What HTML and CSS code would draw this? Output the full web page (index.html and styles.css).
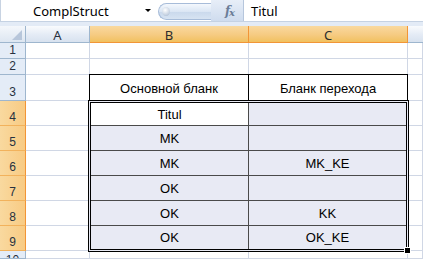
FILE: index.html
```html
<!DOCTYPE html>
<html>
<head>
<meta charset="utf-8">
<link rel="stylesheet" href="styles.css">
</head>
<body>
<div class="app">
  <div class="fbar">
    <div class="namebox"><span class="name">ComplStruct</span><span class="arrow"></span></div>
    <div class="splitter"><span class="knob"><span class="ball"></span></span></div>
    <div class="fx"><span>f</span><span class="x">x</span></div>
    <div class="input">Titul</div>
  </div>
  <div class="band"></div>
  <div class="sheet">
    <div class="table">
      <div class="thead">
        <div class="th th-b">Основной бланк</div>
        <div class="th">Бланк перехода</div>
      </div>
      <div class="tbody">
        <div class="td td-b active">Titul</div><div class="td"></div>
        <div class="td td-b">MK</div><div class="td"></div>
        <div class="td td-b">MK</div><div class="td">MK_KE</div>
        <div class="td td-b">OK</div><div class="td"></div>
        <div class="td td-b">OK</div><div class="td">KK</div>
        <div class="td td-b last">OK</div><div class="td last">OK_KE</div>
      </div>
      <span class="handle"></span>
    </div>

    <div class="corner"><span class="tri"></span></div>
    <div class="ch">A</div>
    <div class="ch sel">B</div>
    <div class="ch sel">C</div>
    <div class="ch ch-last"></div>

    <div class="rh">1</div><div class="c"></div><div class="c"></div><div class="c"></div><div class="c"></div>
    <div class="rh">2</div><div class="c"></div><div class="c"></div><div class="c"></div><div class="c"></div>
    <div class="rh">3</div><div class="c"></div><div class="c"></div>
    <div class="rh sel">4</div><div class="c"></div><div class="c"></div>
    <div class="rh sel">5</div><div class="c"></div><div class="c"></div>
    <div class="rh sel">6</div><div class="c"></div><div class="c"></div>
    <div class="rh sel">7</div><div class="c"></div><div class="c"></div>
    <div class="rh sel">8</div><div class="c"></div><div class="c"></div>
    <div class="rh sel">9</div><div class="c"></div><div class="c"></div>
    <div class="rh rh-10">10</div><div class="c"></div><div class="c"></div><div class="c"></div><div class="c"></div>
  </div>
</div>
</body>
</html>
```

FILE: styles.css
```css
html, body {
  margin: 0;
  padding: 0;
  width: 423px;
  height: 259px;
  overflow: hidden;
  background: #ffffff;
}

.app {
  width: 423px;
  height: 259px;
  display: flex;
  flex-direction: column;
  overflow: hidden;
}

/* ---------- formula bar ---------- */
.fbar {
  flex: 0 0 auto;
  height: 21px;
  display: flex;
  align-items: stretch;
  background: #ffffff;
  border-bottom: 1px solid #c5d2e3;
  font-family: "Noto Sans", sans-serif;
  font-size: 13px;
  color: #000;
}

.namebox {
  width: 158px;
  display: flex;
  align-items: center;
  box-sizing: border-box;
  padding-left: 32px;
  padding-right: 6px;
  border-left: 1px solid #c8d3e2;
}

.name {
  flex: 1;
}

.arrow {
  width: 0;
  height: 0;
  border-left: 3px solid transparent;
  border-right: 3px solid transparent;
  border-top: 3px solid #000;
  margin-right: 1px;
}

.splitter {
  width: 53px;
  display: flex;
  align-items: center;
}

.knob {
  display: block;
  position: relative;
  width: 100%;
  height: 17px;
  margin-top: 2px;
  box-sizing: border-box;
  border: 1px solid #a7bcd9;
  border-right: none;
  border-radius: 9px 0 0 9px;
  background: linear-gradient(#f4f8fd, #dbe6f4 50%, #c9d8ec 51%, #d7e3f2);
}

.ball {
  position: absolute;
  left: 3px;
  top: 3px;
  width: 8px;
  height: 9px;
  border-radius: 50%;
  background: radial-gradient(circle at 40% 35%, #ffffff, #c9d4e3 60%, #9fb2cb);
}

.fx {
  width: 33px;
  display: flex;
  align-items: center;
  justify-content: center;
  box-sizing: border-box;
  padding-left: 5px;
  background: linear-gradient(#e7eef8, #cfdcee);
  border-right: 1px solid #b6c6dc;
  font-family: "DejaVu Serif", "Liberation Serif", serif;
  font-style: italic;
  font-weight: bold;
  font-size: 12px;
  color: #6b7d98;
  letter-spacing: -1px;
}

.fx .x {
  font-size: 10px;
  margin-top: 3px;
}

.input {
  flex: 1;
  display: flex;
  align-items: center;
  padding-left: 7px;
}

.band {
  flex: 0 0 auto;
  height: 4px;
  background: #e3ebf6;
}

/* ---------- sheet ---------- */
.sheet {
  flex: 1 1 0;
  min-height: 0;
  overflow: hidden;
  display: grid;
  grid-template-columns: 26px 64px 159px 159px 1fr;
  grid-template-rows: 17px 16px 16px 26px repeat(6, 25px) minmax(0, 1fr);
  font-family: "Liberation Sans", Arial, sans-serif;
  font-size: 13px;
}

.c {
  box-sizing: border-box;
  min-height: 0;
  border-right: 1px solid #d0d7e5;
  border-bottom: 1px solid #d0d7e5;
  background: #fff;
}

.corner {
  position: relative;
  box-sizing: border-box;
  border-right: 1px solid #9eb6ce;
  border-bottom: 1px solid #9eb6ce;
  background: linear-gradient(#f4f7fb, #dde6f1);
}

.tri {
  position: absolute;
  right: 3px;
  bottom: 2px;
  width: 0;
  height: 0;
  border-left: 10px solid transparent;
  border-bottom: 10px solid #b7c6da;
}

.ch {
  box-sizing: border-box;
  display: flex;
  align-items: center;
  justify-content: center;
  border-right: 1px solid #9eb6ce;
  border-bottom: 1px solid #9eb6ce;
  background: linear-gradient(#f9fbfd, #e4ebf5 55%, #d8e2ef);
  font-family: "Noto Sans", sans-serif;
  font-size: 13px;
  color: #27313f;
  padding-top: 1px;
}

.ch.sel {
  background: linear-gradient(#f9d99f, #f6cb82 55%, #f1c15f);
  border-right-color: #f29536;
  border-bottom-color: #f29536;
  color: #2c2c2c;
}

.ch-last {
  border-right: none;
}

.rh {
  box-sizing: border-box;
  min-height: 0;
  display: flex;
  align-items: flex-end;
  justify-content: center;
  padding-bottom: 1px;
  border-right: 1px solid #9eb6ce;
  border-bottom: 1px solid #9eb6ce;
  background: #e4ecf7;
  font-family: "Liberation Sans", Arial, sans-serif;
  font-size: 12px;
  line-height: 13px;
  color: #27313f;
}

.rh-10 {
  overflow: hidden;
  align-items: flex-start;
  padding-top: 3px;
  padding-bottom: 0;
}

.rh.sel {
  background: linear-gradient(90deg, #f9d99f, #f8cb84);
  border-right-color: #f29536;
  border-bottom-color: #f2b25c;
}

/* ---------- data table ---------- */
.table {
  grid-column: 3 / 5;
  grid-row: 4 / 11;
  margin: -1px 0 0 -1px;
  display: flex;
  flex-direction: column;
  position: relative;
  z-index: 1;
}

.thead {
  flex: 0 0 auto;
  height: 26px;
  box-sizing: border-box;
  display: grid;
  grid-template-columns: 159px 1fr;
  border: 1px solid #000;
  border-bottom: none;
  background: #fff;
}

.th {
  display: flex;
  align-items: center;
  justify-content: center;
  padding-top: 1px;
}

.th-b {
  border-right: 1px solid #000;
}

.tbody {
  flex: 1 1 0;
  margin: 0 -1px -1px -1px;
  border: 3px double #000;
  display: grid;
  grid-template-columns: 158px 1fr;
  grid-template-rows: 23px repeat(4, 25px) 1fr;
  background: #e8eaf4;
}

.td {
  display: flex;
  align-items: center;
  justify-content: center;
  border-bottom: 1px solid #4a4a4a;
}

.td-b {
  border-right: 1px solid #4a4a4a;
}

.td.last {
  border-bottom: none;
}

.td.active {
  background: #fff;
}

.handle {
  position: absolute;
  right: -2px;
  bottom: -2px;
  width: 5px;
  height: 5px;
  background: #000;
  box-shadow: 0 0 0 1px #fff;
}
```
